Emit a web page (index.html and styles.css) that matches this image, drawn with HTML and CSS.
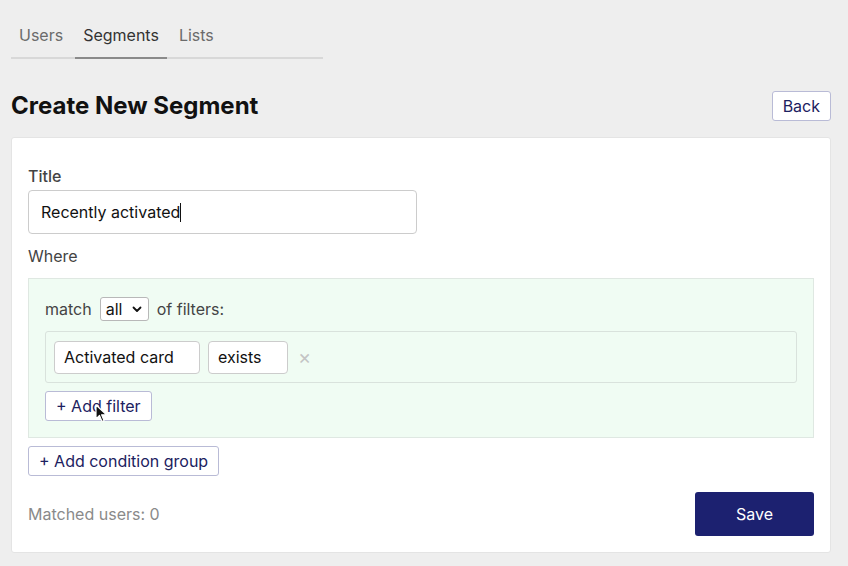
FILE: index.html
```html
<!DOCTYPE html>
<html>
<head>
<meta charset="utf-8">
<link rel="stylesheet" href="styles.css">
</head>
<body>
<div class="page">
  <nav class="tabs">
    <a class="tab">Users</a>
    <a class="tab active">Segments</a>
    <a class="tab">Lists</a>
  </nav>
  <header class="head">
    <h1 class="title">Create New Segment</h1>
    <button class="btn">Back</button>
  </header>
  <section class="card">
    <label class="label">Title</label>
    <div class="input title-input">Recently activated<span class="caret"></span></div>
    <div class="label where">Where</div>
    <div class="group">
      <div class="match-row">
        <span>match</span>
        <span class="select">all<svg class="chev" width="10" height="7" viewBox="0 0 10 7"><path d="M1.5 1.5 L5 5 L8.5 1.5" fill="none" stroke="#111" stroke-width="1.8" stroke-linecap="round" stroke-linejoin="round"/></svg></span>
        <span>of filters:</span>
      </div>
      <div class="filter-row">
        <div class="input small w-prop">Activated card</div>
        <div class="input small w-op">exists</div>
        <span class="remove">×</span>
      </div>
      <button class="btn add-filter">+ Add filter</button>
    </div>
    <button class="btn add-group">+ Add condition group</button>
    <footer class="foot">
      <span class="matched">Matched users: 0</span>
      <button class="save">Save</button>
    </footer>
  </section>
</div>
<svg class="cursor" width="14" height="20" viewBox="0 0 14 20"><path d="M1 1 L1 15 L4.5 11.5 L7 17.5 L9 16.6 L6.6 10.8 L11.5 10.8 Z" fill="#111" stroke="#fff" stroke-width="1.2" stroke-linejoin="round"/></svg>
</body>
</html>
```
FILE: styles.css
```css
* { box-sizing: border-box; }
html, body { margin: 0; padding: 0; }
body {
  background: #eeeeee;
  font-family: Inter, "Noto Sans", sans-serif;
  font-size: 16px;
  color: #222;
  position: relative;
  width: 848px;
  height: 566px;
  overflow: hidden;
}
.page { padding: 0 17px 0 11px; }
.tabs {
  display: flex;
  gap: 4px;
  width: 312px;
  border-bottom: 2px solid #d8d8d8;
  padding-top: 25px;
}
.tab {
  padding: 0 8px 12px;
  color: #6b6b6b;
  line-height: 20px;
  margin-bottom: -2px;
  border-bottom: 2px solid transparent;
}
.tab.active { color: #333; border-bottom-color: #8a8a8a; }
.head {
  display: flex;
  justify-content: space-between;
  align-items: center;
  margin-top: 31px;
  height: 32px;
}
.title { margin: 0; font-size: 24px; font-weight: 700; color: #111; line-height: 28px; }
.btn {
  font-family: inherit;
  font-size: 16px;
  color: #1c2160;
  background: #fff;
  border: 1px solid #b9bbd6;
  border-radius: 3px;
  height: 30px;
  padding: 0 10px;
  line-height: 28px;
}
.card {
  margin-top: 15px;
  background: #fff;
  border: 1px solid #e4e4e4;
  border-radius: 3px;
  padding: 28px 16px 16px;
}
.label { display: block; color: #444; line-height: 20px; font-weight: 500; }
.input {
  border: 1px solid #cccccc;
  border-radius: 4px;
  background: #fff;
  color: #111;
}
.title-input {
  margin-top: 4px;
  width: 389px;
  height: 44px;
  padding: 0 12px;
  line-height: 42px;
}
.caret { display: inline-block; width: 1px; height: 19px; background: #111; vertical-align: -4px; }
.where { margin-top: 12px; font-weight: 400; }
.group {
  margin-top: 12px;
  background: #f0fcf3;
  border: 1px solid #dfe8e2;
  padding: 18px 16px 16px;
}
.match-row { display: flex; align-items: center; gap: 8px; color: #444; height: 24px; }
.select {
  display: inline-flex;
  align-items: center;
  justify-content: space-between;
  width: 49px;
  height: 24px;
  border: 1px solid #b8b8b8;
  border-radius: 3px;
  background: #fff;
  color: #111;
  padding: 0 6px 0 5px;
}
.filter-row {
  margin-top: 10px;
  border: 1px solid #d9e2dc;
  border-radius: 3px;
  height: 52px;
  padding: 0 8px;
  display: flex;
  align-items: center;
  gap: 8px;
}
.small { height: 33px; line-height: 31px; padding: 0 9px; }
.w-prop { width: 146px; }
.w-op { width: 80px; }
.remove { color: #c4c4c4; font-size: 20px; margin-left: 2px; line-height: 20px; }
.add-filter { margin-top: 8px; display: block; }
.add-group { margin-top: 8px; display: block; }
.foot {
  margin-top: 16px;
  display: flex;
  justify-content: space-between;
  align-items: center;
}
.matched { color: #8a8a8a; }
.save {
  font-family: inherit;
  font-size: 16px;
  color: #fff;
  background: #1c2170;
  border: none;
  border-radius: 3px;
  width: 119px;
  height: 44px;
}
.cursor { position: absolute; left: 95px; top: 404px; }
```
